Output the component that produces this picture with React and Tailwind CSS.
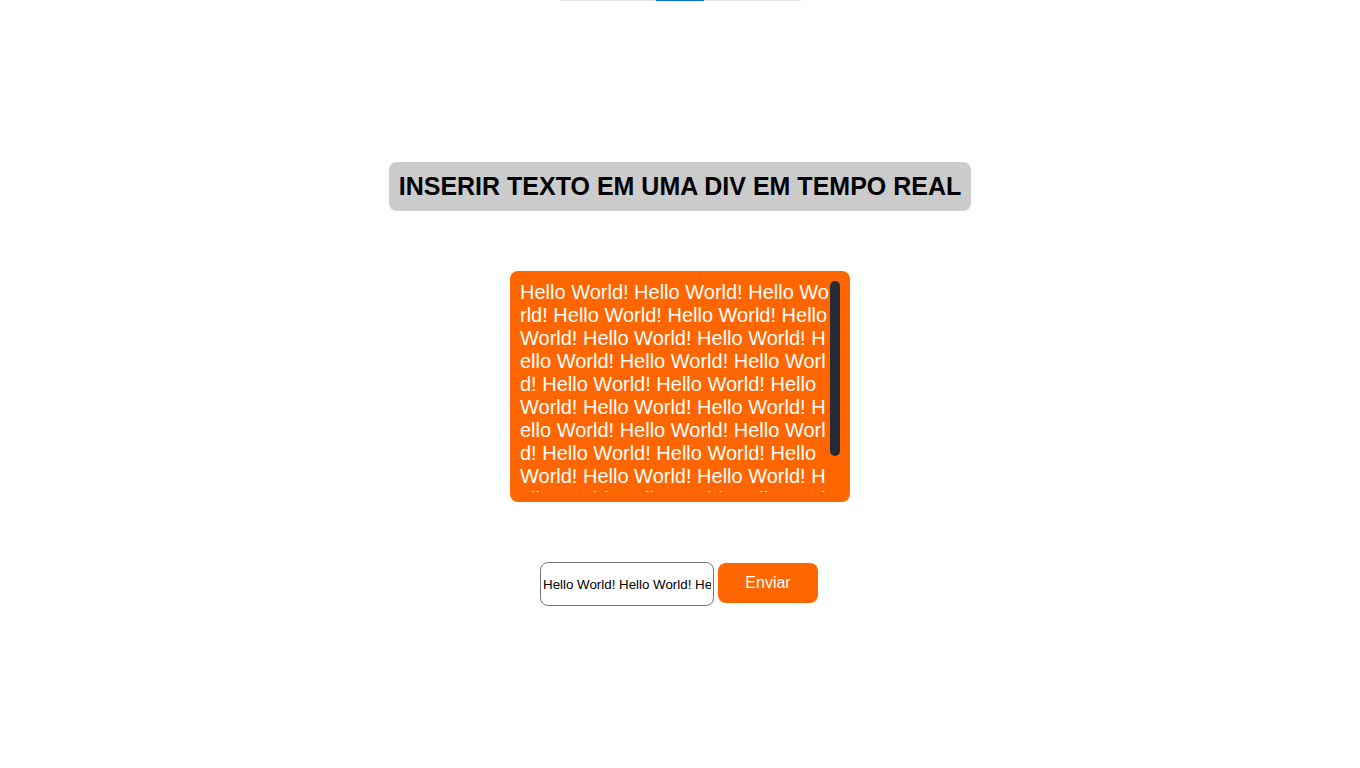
import React from "react";

const text = Array(30).fill("Hello World!").join(" ");

export default function App() {
  return (
    <div className="min-h-[768px] w-full bg-white" style={{ fontFamily: '"Liberation Sans", Arial, sans-serif' }}>
      <div className="flex justify-center">
        <div className="flex h-px w-[241px] bg-[#e5e5e5]">
          <div className="ml-[96px] h-px w-[48px] bg-[#0078d7]" />
        </div>
      </div>
      <div className="mt-[161px] flex justify-center">
        <h1 className="rounded-lg bg-[#cccccc] px-[10px] py-[11px] text-[25px] font-bold leading-[27px] text-black">
          INSERIR TEXTO EM UMA DIV EM TEMPO REAL
        </h1>
      </div>
      <div className="mt-[60px] flex justify-center">
        <div className="relative h-[231px] w-[340px] rounded-lg bg-[#ff6600] p-[10px]">
          <div className="h-[211px] w-[320px] overflow-hidden break-all pr-[10px] text-[20px] leading-[23px] text-white">
            {text}
          </div>
          <div className="absolute right-[10px] top-[10px] h-[175px] w-[10px] rounded-[5px] bg-[#262b36]" />
        </div>
      </div>
      <div className="mt-[60px] flex items-start justify-center gap-[4px] pr-[2px]">
        <input
          readOnly
          value={text}
          className="h-[44px] w-[174px] rounded-lg border border-[#767676] px-[2px] text-[13.33px] text-black outline-none"
        />
        <button className="mt-px h-[40px] w-[100px] rounded-lg bg-[#ff6600] text-[16px] text-white">
          Enviar
        </button>
      </div>
    </div>
  );
}
